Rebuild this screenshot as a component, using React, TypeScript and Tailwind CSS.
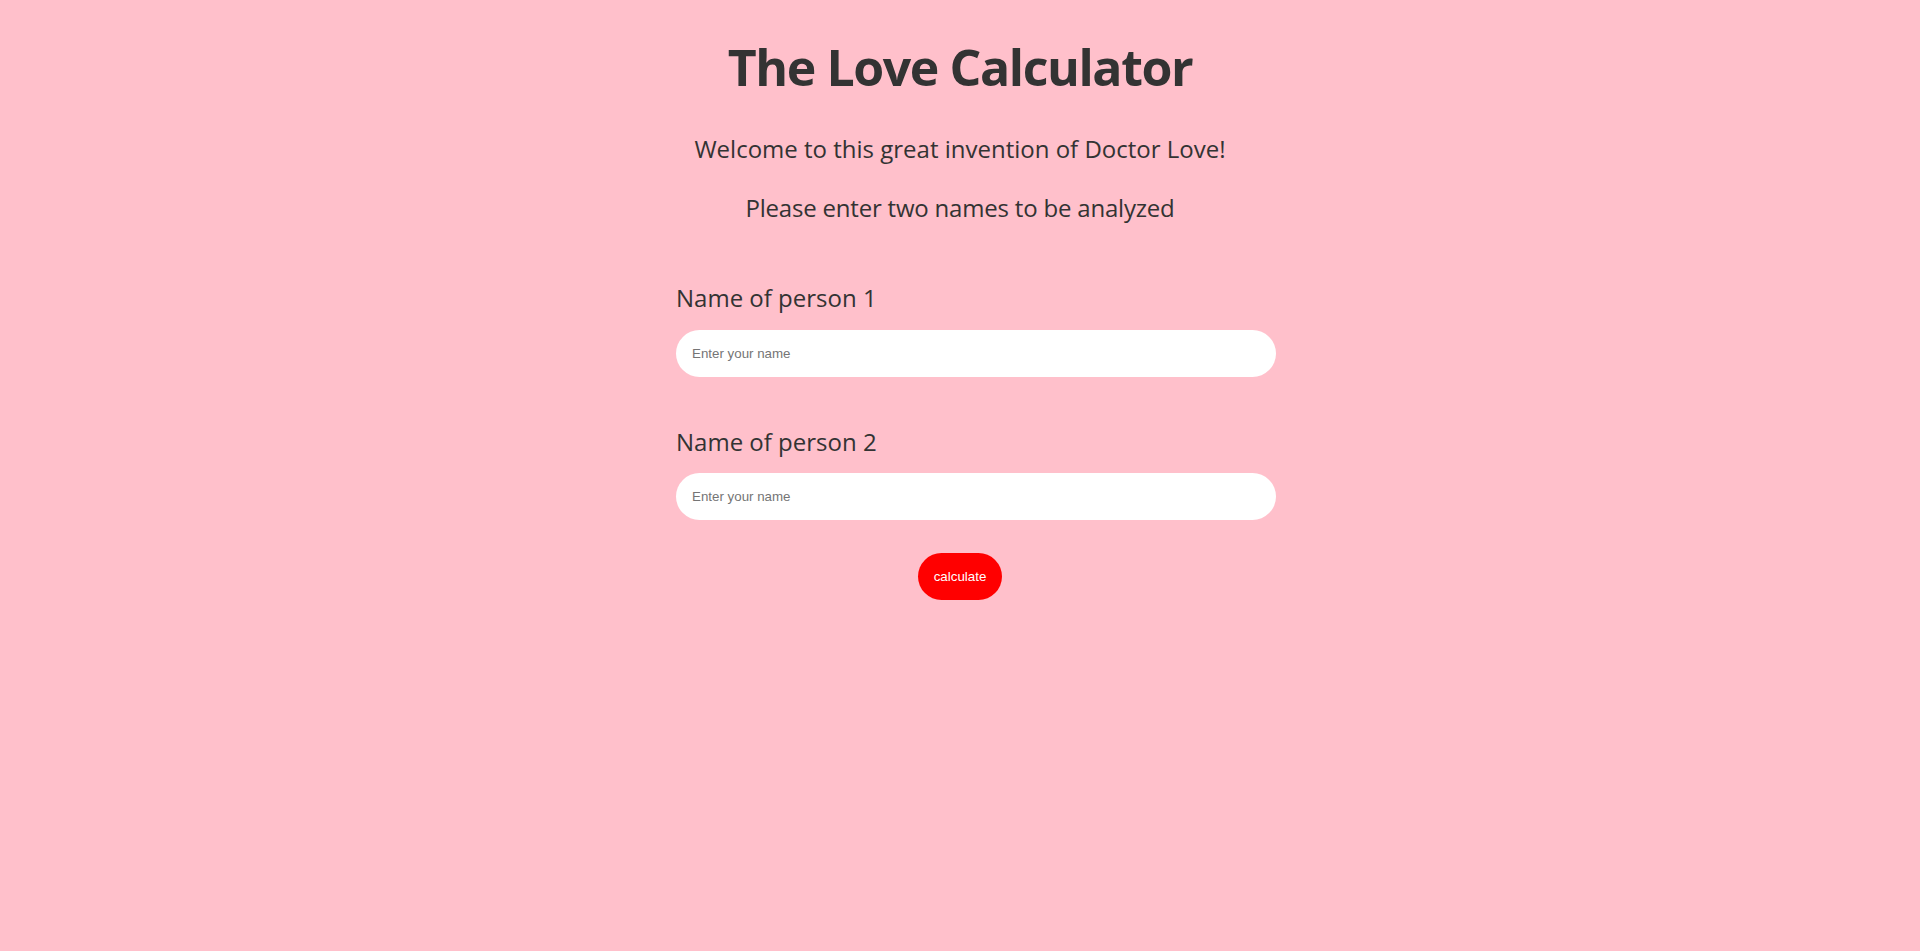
export default function App() {
  return (
    <div className="min-h-screen bg-[#ffc0cb] text-[#333] font-['Open_Sans',sans-serif]">
      <div className="flex flex-col items-center pt-[35px]">
        <h1 className="text-[50px] font-bold leading-[64px] tracking-[-1.4px] text-center">The Love Calculator</h1>
        <p className="mt-[34px] text-[24px] leading-[32px] text-center">Welcome to this great invention of Doctor Love!</p>
        <p className="mt-[27px] text-[24px] leading-[32px] tracking-[-0.2px] text-center">Please enter two names to be analyzed</p>

        <form className="w-[568px] mt-[58px] flex flex-col" onSubmit={(e) => e.preventDefault()}>
          <label className="text-[24px] leading-[32px]">Name of person 1</label>
          <input
            type="text"
            placeholder="Enter your name"
            className="mt-[16px] w-[600px] h-[47px] px-4 rounded-full bg-white outline-none font-['Liberation_Sans',Arial,sans-serif] text-[13.33px] text-black placeholder:text-[#757575]"
          />
          <label className="mt-[49px] text-[24px] leading-[32px]">Name of person 2</label>
          <input
            type="text"
            placeholder="Enter your name"
            className="mt-[15px] w-[600px] h-[47px] px-4 rounded-full bg-white outline-none font-['Liberation_Sans',Arial,sans-serif] text-[13.33px] text-black placeholder:text-[#757575]"
          />
          <div className="mt-[33px] flex justify-center">
            <button
              type="submit"
              className="h-[47px] px-4 rounded-full bg-[#ff0000] text-white font-['Liberation_Sans',Arial,sans-serif] text-[13.33px]"
            >
              calculate
            </button>
          </div>
        </form>
      </div>
    </div>
  );
}
